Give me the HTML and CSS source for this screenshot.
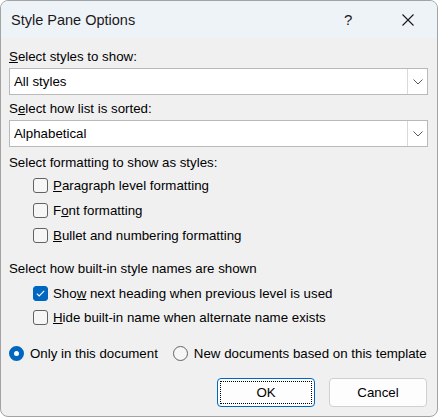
FILE: index.html
```html
<!DOCTYPE html>
<html lang="en">
<head>
  <meta charset="UTF-8" />
  <title>Style Pane Options</title>
  <link rel="stylesheet" href="styles.css">
</head>
<body>
  <div class="dialog">
    <div class="titlebar">
      <span class="title">Style Pane Options</span>
      <span class="help">?</span>
      <span class="close">
        <svg width="12" height="12" viewBox="0 0 12 12"><path d="M0.5 0.5 L11.5 11.5 M11.5 0.5 L0.5 11.5" stroke="#1a1a1a" stroke-width="1.1" fill="none"/></svg>
      </span>
    </div>

    <div class="content">
      <div class="label first"><u>S</u>elect styles to show:</div>
      <div class="select">
        <span class="select-value">All styles</span>
        <span class="select-arrow">
          <svg width="10" height="6" viewBox="0 0 10 6"><path d="M0.5 0.5 L5 5 L9.5 0.5" stroke="#5a5a5a" stroke-width="1" fill="none"/></svg>
        </span>
      </div>

      <div class="label second">S<u>e</u>lect how list is sorted:</div>
      <div class="select">
        <span class="select-value">Alphabetical</span>
        <span class="select-arrow">
          <svg width="10" height="6" viewBox="0 0 10 6"><path d="M0.5 0.5 L5 5 L9.5 0.5" stroke="#5a5a5a" stroke-width="1" fill="none"/></svg>
        </span>
      </div>

      <div class="label third">Select formatting to show as styles:</div>
      <div class="checks big">
        <div class="check-row"><span class="box"></span><span><u>P</u>aragraph level formatting</span></div>
        <div class="check-row"><span class="box"></span><span>F<u>o</u>nt formatting</span></div>
        <div class="check-row"><span class="box"></span><span><u>B</u>ullet and numbering formatting</span></div>
      </div>

      <div class="label fourth">Select how built-in style names are shown</div>
      <div class="checks small">
        <div class="check-row"><span class="box checked">
          <svg width="9" height="7" viewBox="0 0 9 7"><path d="M0.8 3.6 L3.2 5.9 L8.2 0.8" stroke="#ffffff" stroke-width="1.1" fill="none"/></svg>
        </span><span>Sho<u>w</u> next heading when previous level is used</span></div>
        <div class="check-row"><span class="box"></span><span><u>H</u>ide built-in name when alternate name exists</span></div>
      </div>

      <div class="radios">
        <div class="radio-item"><span class="radio on"></span><span>Only in this document</span></div>
        <div class="radio-item"><span class="radio"></span><span>New documents based on this template</span></div>
      </div>

      <div class="buttons">
        <button class="btn primary"><span class="focus">OK</span></button>
        <button class="btn">Cancel</button>
      </div>
    </div>
  </div>
</body>
</html>
```

FILE: styles.css
```css
html, body {
  margin: 0;
  padding: 0;
  background-color: #ffffff;
}
body {
  font-family: "Liberation Sans", Arial, sans-serif;
  font-size: 13.3px;
  color: #000000;
}
.dialog {
  width: 436px;
  height: 415px;
  border: 1px solid #a3a3a3;
  border-radius: 8px;
  background-color: #f0f0f0;
  overflow: hidden;
}
.titlebar {
  height: 37px;
  background-color: #eef3f8;
  display: flex;
  align-items: center;
}
.title {
  font-size: 14.5px;
  color: #1a1a1a;
  margin-left: 10px;
  flex: 1;
}
.help {
  font-size: 15px;
  color: #1a1a1a;
  width: 14px;
  margin-right: 44px;
}
.close {
  display: flex;
  margin-right: 23px;
}
.content {
  padding: 0 9px 0 8px;
}
.label {
  height: 16px;
  line-height: 16px;
}
.label.first { margin-top: 11px; }
.label.second { margin-top: 6px; }
.label.third { margin-top: 8px; }
.label.fourth { margin-top: 13px; }

.select {
  margin-top: 3px;
  height: 25px;
  border: 1px solid #b9b9b9;
  background-color: #ffffff;
  display: flex;
  align-items: center;
}
.select-value {
  flex: 1;
  padding-left: 4px;
}
.select-arrow {
  width: 19px;
  height: 25px;
  border-left: 1px solid #d9d9d9;
  display: flex;
  align-items: center;
  justify-content: center;
}

.checks {
  padding-left: 24px;
}
.checks.big { margin-top: 2px; }
.checks.big .check-row { height: 25px; }
.checks.small { margin-top: 4px; }
.checks.small .check-row { height: 24px; }

.check-row {
  display: flex;
  align-items: center;
  gap: 5px;
}
.box {
  width: 13px;
  height: 13px;
  border: 1px solid #626262;
  border-radius: 3px;
  background-color: #f6f6f6;
  display: flex;
  align-items: center;
  justify-content: center;
}
.box.checked {
  background-color: #0067c0;
  border-color: #0067c0;
}

.radios {
  margin-top: 14px;
  height: 20px;
  display: flex;
  align-items: center;
  gap: 15px;
}
.radio-item {
  display: flex;
  align-items: center;
  gap: 6px;
}
.radio {
  width: 13px;
  height: 13px;
  border: 1px solid #636363;
  border-radius: 50%;
  background-color: #f6f6f6;
}
.radio.on {
  width: 5px;
  height: 5px;
  border: 5px solid #0067c0;
  background-color: #ffffff;
}

.buttons {
  margin-top: 15px;
  display: flex;
  justify-content: flex-end;
  gap: 14px;
  padding-right: 1px;
}
.btn {
  width: 98px;
  height: 29px;
  font-family: "Liberation Sans", Arial, sans-serif;
  font-size: 13.3px;
  color: #000000;
  background-color: #fdfdfd;
  border: 1px solid #d0d0d0;
  border-radius: 4px;
  padding: 0;
}
.btn.primary {
  border: 1px solid #0067c0;
  padding: 2px;
}
.focus {
  display: flex;
  align-items: center;
  justify-content: center;
  height: 21px;
  border: 1px dotted #000000;
}
```
